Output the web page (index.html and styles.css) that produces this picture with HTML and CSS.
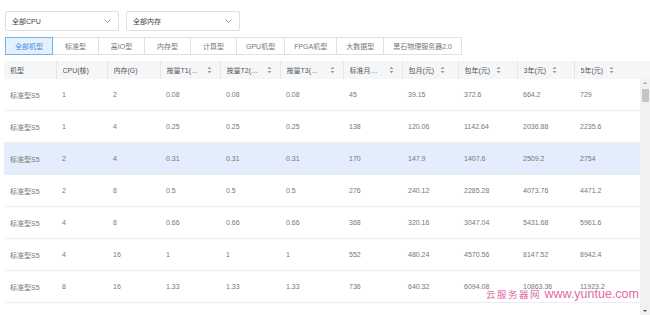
FILE: index.html
```html
<!DOCTYPE html>
<html lang="zh-CN">
<head>
    <meta charset="UTF-8">
    <meta name="viewport" content="width=device-width, initial-scale=1.0">
    <title>机型价格</title>
    <link rel="stylesheet" href="styles.css">
</head>
<body>
    <div class="page">
        <div class="filters">
            <div class="select">
                <span>全部CPU</span>
                <svg class="chev" width="7" height="4" viewBox="0 0 7 4"><path d="M0.5 0.5 L3.5 3.5 L6.5 0.5" fill="none" stroke="#888" stroke-width="0.9"/></svg>
            </div>
            <div class="select">
                <span>全部内存</span>
                <svg class="chev" width="7" height="4" viewBox="0 0 7 4"><path d="M0.5 0.5 L3.5 3.5 L6.5 0.5" fill="none" stroke="#888" stroke-width="0.9"/></svg>
            </div>
        </div>

        <div class="tabs">
            <div class="tab active">全部机型</div>
            <div class="tab">标准型</div>
            <div class="tab">高IO型</div>
            <div class="tab">内存型</div>
            <div class="tab">计算型</div>
            <div class="tab">GPU机型</div>
            <div class="tab">FPGA机型</div>
            <div class="tab">大数据型</div>
            <div class="tab">黑石物理服务器2.0</div>
        </div>

        <div class="grid">
            <table class="head">
                <colgroup>
                    <col style="width:52px"><col style="width:51px"><col style="width:53px"><col style="width:60px"><col style="width:60px"><col style="width:63px"><col style="width:59px"><col style="width:56px"><col style="width:59px"><col style="width:57px"><col>
                </colgroup>
                <tr>
                    <th><div class="th"><span>机型</span></div></th>
                    <th><div class="th"><span>CPU(核)</span></div></th>
                    <th><div class="th"><span>内存(G)</span></div></th>
                    <th><div class="th"><span>按量T1(元/小时)</span><svg class="sort" width="5" height="8" viewBox="0 0 5 8"><path d="M0.6 3 L2.5 0.8 L4.4 3 Z M0.6 5 L2.5 7.2 L4.4 5 Z" fill="#999"/></svg></div></th>
                    <th><div class="th"><span>按量T2(元/小时)</span><svg class="sort" width="5" height="8" viewBox="0 0 5 8"><path d="M0.6 3 L2.5 0.8 L4.4 3 Z M0.6 5 L2.5 7.2 L4.4 5 Z" fill="#999"/></svg></div></th>
                    <th><div class="th"><span>按量T3(元/小时)</span><svg class="sort" width="5" height="8" viewBox="0 0 5 8"><path d="M0.6 3 L2.5 0.8 L4.4 3 Z M0.6 5 L2.5 7.2 L4.4 5 Z" fill="#999"/></svg></div></th>
                    <th><div class="th"><span>标准月付(元)</span><svg class="sort" width="5" height="8" viewBox="0 0 5 8"><path d="M0.6 3 L2.5 0.8 L4.4 3 Z M0.6 5 L2.5 7.2 L4.4 5 Z" fill="#999"/></svg></div></th>
                    <th><div class="th"><span>包月(元)</span><svg class="sort" width="5" height="8" viewBox="0 0 5 8"><path d="M0.6 3 L2.5 0.8 L4.4 3 Z M0.6 5 L2.5 7.2 L4.4 5 Z" fill="#999"/></svg></div></th>
                    <th><div class="th"><span>包年(元)</span><svg class="sort" width="5" height="8" viewBox="0 0 5 8"><path d="M0.6 3 L2.5 0.8 L4.4 3 Z M0.6 5 L2.5 7.2 L4.4 5 Z" fill="#999"/></svg></div></th>
                    <th><div class="th"><span>3年(元)</span><svg class="sort" width="5" height="8" viewBox="0 0 5 8"><path d="M0.6 3 L2.5 0.8 L4.4 3 Z M0.6 5 L2.5 7.2 L4.4 5 Z" fill="#999"/></svg></div></th>
                    <th><div class="th"><span>5年(元)</span><svg class="sort" width="5" height="8" viewBox="0 0 5 8"><path d="M0.6 3 L2.5 0.8 L4.4 3 Z M0.6 5 L2.5 7.2 L4.4 5 Z" fill="#999"/></svg></div></th>
                </tr>
            </table>

            <div class="body">
                <table class="rows">
                    <colgroup>
                        <col style="width:52px"><col style="width:51px"><col style="width:53px"><col style="width:60px"><col style="width:60px"><col style="width:63px"><col style="width:59px"><col style="width:56px"><col style="width:59px"><col style="width:57px"><col>
                    </colgroup>
                    <tr><td>标准型S5</td><td>1</td><td>2</td><td>0.08</td><td>0.08</td><td>0.08</td><td>45</td><td>39.15</td><td>372.6</td><td>664.2</td><td>729</td></tr>
                    <tr><td>标准型S5</td><td>1</td><td>4</td><td>0.25</td><td>0.25</td><td>0.25</td><td>138</td><td>120.06</td><td>1142.64</td><td>2036.88</td><td>2235.6</td></tr>
                    <tr class="hover"><td>标准型S5</td><td>2</td><td>4</td><td>0.31</td><td>0.31</td><td>0.31</td><td>170</td><td>147.9</td><td>1407.6</td><td>2509.2</td><td>2754</td></tr>
                    <tr><td>标准型S5</td><td>2</td><td>8</td><td>0.5</td><td>0.5</td><td>0.5</td><td>276</td><td>240.12</td><td>2285.28</td><td>4073.76</td><td>4471.2</td></tr>
                    <tr><td>标准型S5</td><td>4</td><td>8</td><td>0.66</td><td>0.66</td><td>0.66</td><td>368</td><td>320.16</td><td>3047.04</td><td>5431.68</td><td>5961.6</td></tr>
                    <tr><td>标准型S5</td><td>4</td><td>16</td><td>1</td><td>1</td><td>1</td><td>552</td><td>480.24</td><td>4570.56</td><td>8147.52</td><td>8942.4</td></tr>
                    <tr><td>标准型S5</td><td>8</td><td>16</td><td>1.33</td><td>1.33</td><td>1.33</td><td>736</td><td>640.32</td><td>6094.08</td><td>10863.36</td><td>11923.2</td></tr>
                </table>
                <div class="scrollbar">
                    <svg width="10" height="8" viewBox="0 0 10 8"><path d="M3 5 L5 3 L7 5 Z" fill="#a0a0a0"/></svg>
                    <div class="thumb"></div>
                    <div class="track-fill"></div>
                    <svg width="10" height="8" viewBox="0 0 10 8"><path d="M3 3 L5 5 L7 3 Z" fill="#505050"/></svg>
                </div>
            </div>
        </div>

        <div class="watermark"><span class="wm-cn">云服务器网</span> www.yuntue.com</div>
    </div>
</body>
</html>
```

FILE: styles.css
```css
body {
    margin: 0;
    background: #fff;
    font-family: "Liberation Sans", "Noto Sans CJK SC", sans-serif;
    font-size: 7px;
    color: #666;
}
.page {
    position: relative;
    width: 650px;
    height: 315px;
    overflow: hidden;
}
.filters {
    display: flex;
    gap: 7px;
    padding: 11px 0 0 5px;
}
.select {
    box-sizing: border-box;
    width: 114px;
    height: 20px;
    border: 1px solid #dcdfe6;
    border-radius: 2px;
    display: flex;
    align-items: center;
    justify-content: space-between;
    padding: 0 7px 0 6px;
    color: #444;
}
.tabs {
    display: flex;
    margin: 6px 0 0 5px;
}
.tab {
    box-sizing: border-box;
    min-width: 47px;
    height: 18px;
    padding: 0 9px;
    border: 1px solid #e2e2e2;
    margin-left: -1px;
    display: flex;
    align-items: center;
    justify-content: center;
    color: #777;
    white-space: nowrap;
}
.tab:first-child {
    margin-left: 0;
}
.tab.active {
    background: #e4f0fc;
    border-color: #72b2ee;
    color: #3a8ee6;
    position: relative;
}
.grid {
    margin: 6px 0 0 4px;
}
table {
    border-collapse: collapse;
    table-layout: fixed;
}
.head {
    width: 646px;
    background: #f5f6f8;
}
.head th {
    height: 18px;
    padding: 0;
    font-weight: normal;
    text-align: left;
    color: #555;
    border-left: 1px solid #e4e6ea;
}
.head th:first-child {
    border-left: none;
}
.th {
    display: flex;
    align-items: center;
    padding: 0 8px 0 6px;
    white-space: nowrap;
}
.th span {
    overflow: hidden;
    text-overflow: ellipsis;
}
.sort {
    flex-shrink: 0;
    margin-left: 6px;
}
.body {
    display: flex;
    align-items: flex-start;
}
.rows {
    width: 636px;
}
.rows td {
    height: 31px;
    padding: 0 6px;
    border-bottom: 1px solid #eceef2;
    color: #777;
    white-space: nowrap;
}
.rows tr.hover td {
    background: #e3edfb;
}
.scrollbar {
    width: 10px;
    height: 236px;
    background: #f1f1f1;
    display: flex;
    flex-direction: column;
    align-items: center;
}
.scrollbar svg {
    flex-shrink: 0;
}
.thumb {
    width: 7px;
    height: 13px;
    background: #c6c6c6;
    margin-top: 2px;
}
.track-fill {
    flex: 1;
}
.watermark {
    position: absolute;
    left: 486px;
    top: 287px;
    font-family: "Liberation Sans", sans-serif;
    font-size: 12.5px;
    color: #e36ba4;
    white-space: nowrap;
}
.wm-cn {
    font-family: "Noto Sans CJK SC", serif;
    font-size: 9.5px;
    letter-spacing: 1.5px;
}
```
